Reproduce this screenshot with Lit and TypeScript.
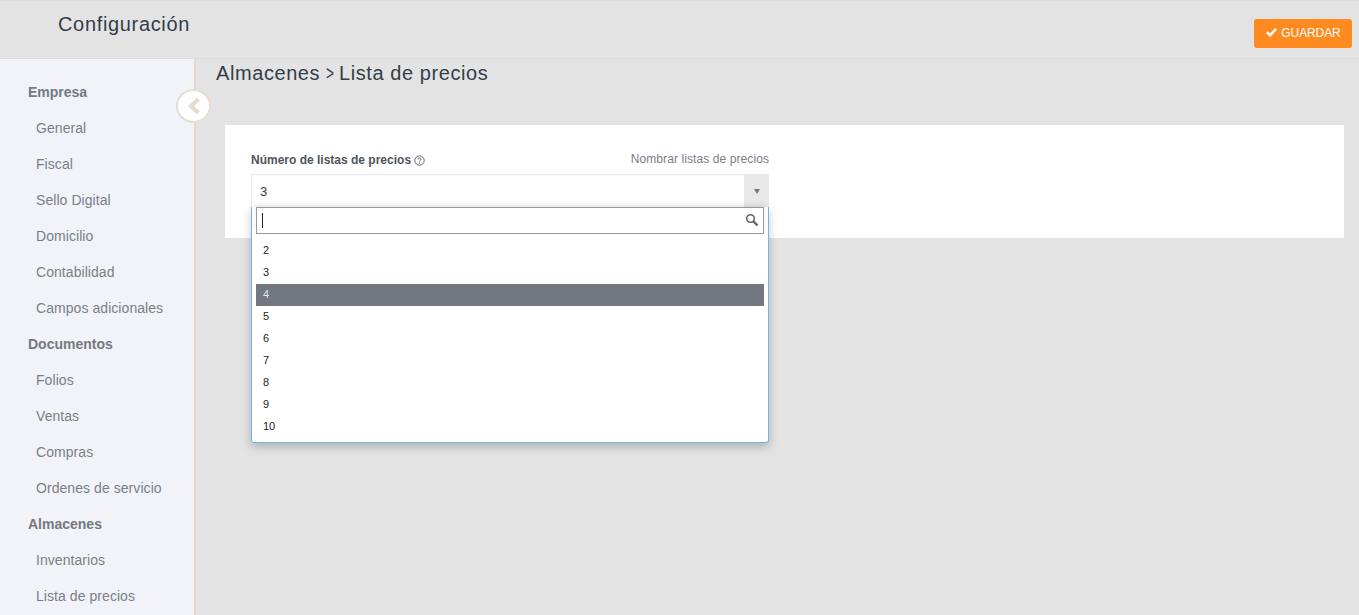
import { LitElement, html, css, svg } from "lit";
import { customElement } from "lit/decorators.js";

const NAV: { head: string; items: string[] }[] = [
  { head: "Empresa", items: ["General", "Fiscal", "Sello Digital", "Domicilio", "Contabilidad", "Campos adicionales"] },
  { head: "Documentos", items: ["Folios", "Ventas", "Compras", "Ordenes de servicio"] },
  { head: "Almacenes", items: ["Inventarios", "Lista de precios"] },
];
const OPTIONS = ["2", "3", "4", "5", "6", "7", "8", "9", "10"];

@customElement("app-root")
export class AppRoot extends LitElement {
  static styles = css`
    :host {
      display: block;
      width: 1359px;
      height: 615px;
      overflow: hidden;
      background: #e3e3e3;
      font-family: "Liberation Sans", Arial, sans-serif;
      color: #343a40;
    }
    .header {
      box-sizing: border-box;
      height: 59px;
      border-top: 1px solid #dcdcdc;
      border-bottom: 1px solid #dbdbdb;
      display: flex;
      justify-content: space-between;
      padding: 0 7px 0 58px;
    }
    .brand {
      margin-top: 12px;
      font-size: 20px;
      line-height: 23px;
      letter-spacing: 0.66px;
      color: #343d4a;
    }
    .save {
      box-sizing: border-box;
      margin-top: 18px;
      width: 98px;
      height: 29px;
      border-radius: 3px;
      background: #ff8a20;
      color: #fff;
      font-size: 12px;
      letter-spacing: -0.1px;
      display: flex;
      align-items: center;
      justify-content: center;
      gap: 3px;
      padding-bottom: 2px;
    }
    .save svg { width: 13px; height: 11px; display: block; }
    .body { display: flex; height: 556px; }
    .side {
      position: relative;
      box-sizing: border-box;
      width: 196px;
      flex: none;
      background: #f1f3f8;
      border-right: 2px solid #e4d9cb;
      padding-top: 15px;
    }
    .head, .item { height: 36px; line-height: 36px; font-size: 14px; white-space: nowrap; }
    .head { padding-left: 28px; font-weight: 700; color: #757983; }
    .item { padding-left: 36px; color: #7b7f88; letter-spacing: 0.06px; }
    .toggle {
      position: absolute;
      left: 176px;
      top: 30px;
      box-sizing: border-box;
      width: 35px;
      height: 34px;
      border-radius: 50%;
      background: #fff;
      border: 2px solid #e8ddd0;
      display: flex;
      align-items: center;
      justify-content: center;
    }
    .toggle svg { width: 14px; height: 18px; display: block; }
    .main { flex: 1; min-width: 0; padding-left: 20px; }
    .title {
      height: 28px;
      font-size: 20px;
      line-height: 28px;
      letter-spacing: 0.58px;
      color: #343d4a;
    }
    .gt {
      display: inline-block;
      width: 6.5px;
      transform: scaleX(0.68);
      transform-origin: left center;
      letter-spacing: 0;
    }
    .card {
      position: relative;
      box-sizing: border-box;
      margin: 38px 0 0 9px;
      width: 1119px;
      height: 113px;
      background: #fff;
      padding: 25px 26px 0;
    }
    .field { width: 518px; position: relative; }
    .labels {
      display: flex;
      justify-content: space-between;
      align-items: center;
      height: 20px;
      margin-bottom: 4px;
    }
    .label { font-size: 12px; font-weight: 700; color: #4f545c; display: flex; align-items: center; gap: 3px; }
    .label svg { width: 11px; height: 11px; display: block; }
    .rename { font-size: 12px; color: #7a7e87; letter-spacing: 0.09px; padding-bottom: 2px; }
    .select {
      box-sizing: border-box;
      height: 34px;
      border: 1px solid #e6e8ea;
      border-bottom: 0;
      display: flex;
      align-items: center;
      justify-content: space-between;
      font-size: 13px;
      color: #343a40;
      padding-left: 8px;
    }
    .arrow {
      width: 25px;
      height: 33px;
      background: #e9e9e9;
      display: flex;
      align-items: center;
      justify-content: center;
      margin-right: -1px;
    }
    .arrow i {
      display: block;
      width: 0;
      height: 0;
      border-left: 3.5px solid transparent;
      border-right: 3.5px solid transparent;
      border-top: 5px solid #777;
    }
    .dropdown {
      position: absolute;
      left: 0;
      top: 57px;
      box-sizing: border-box;
      width: 518px;
      height: 236px;
      background: #fff;
      border: 1px solid #6db5ea;
      border-top: 0;
      border-radius: 0 0 3px 3px;
      box-shadow: 0 4px 10px rgba(0, 0, 0, 0.22);
      padding: 0 4px;
    }
    .search {
      position: relative;
      box-sizing: border-box;
      height: 27px;
      border: 1px solid #9a9a9a;
      background: #fff;
      box-shadow: 0 -3px 6px rgba(0,0,0,0.06);
      display: flex;
      align-items: center;
      justify-content: space-between;
      padding: 0 4px 0 5px;
    }
    .caret { width: 1px; height: 15px; background: #222; }
    .search svg { width: 14px; height: 14px; display: block; margin-top: -2px; }
    .list { margin-top: 6px; }
    .opt {
      height: 22px;
      line-height: 20px;
      font-size: 11px;
      color: #222;
      padding-left: 7px;
    }
    .opt.on { background: #727780; color: #e4e6ea; }
  `;

  render() {
    const check = svg`<path d="M1 6 L2.8 4.2 L5 6.4 L10.2 1 L12 2.8 L5 10 Z" fill="#fff"/>`;
    return html`
      <div class="header">
        <div class="brand">Configuración</div>
        <div class="save"><svg viewBox="0 0 13 11">${check}</svg>GUARDAR</div>
      </div>
      <div class="body">
        <aside class="side">
          ${NAV.map(
            (g) => html`<div class="head">${g.head}</div>${g.items.map((i) => html`<div class="item">${i}</div>`)}`
          )}
          <div class="toggle">
            <svg viewBox="0 0 14 18"><path d="M11.5 2 L4 9 L11.5 16" fill="none" stroke="#e6dbce" stroke-width="4.4"/></svg>
          </div>
        </aside>
        <main class="main">
          <div class="title">Almacenes <span class="gt">&gt;</span> Lista de precios</div>
          <section class="card">
            <div class="field">
              <div class="labels">
                <span class="label">Número de listas de precios
                  <svg viewBox="0 0 11 11">
                    <circle cx="5.5" cy="5.5" r="4.7" fill="none" stroke="#555" stroke-width="0.9"/>
                    <path d="M3.9 4.4 C3.9 2.4 7.1 2.4 7.1 4.3 C7.1 5.4 5.5 5.4 5.5 6.7" fill="none" stroke="#555" stroke-width="0.9"/>
                    <circle cx="5.5" cy="8.2" r="0.6" fill="#555"/>
                  </svg>
                </span>
                <span class="rename">Nombrar listas de precios</span>
              </div>
              <div class="select"><span>3</span><span class="arrow"><i></i></span></div>
              <div class="dropdown">
                <div class="search">
                  <span class="caret"></span>
                  <svg viewBox="0 0 14 14">
                    <circle cx="5.5" cy="5.5" r="3.8" fill="none" stroke="#666" stroke-width="1.6"/>
                    <path d="M8.4 8.4 L12.5 12.5" stroke="#666" stroke-width="2.4"/>
                  </svg>
                </div>
                <div class="list">
                  ${OPTIONS.map((o) => html`<div class="opt ${o === "4" ? "on" : ""}">${o}</div>`)}
                </div>
              </div>
            </div>
          </section>
        </main>
      </div>
    `;
  }
}
